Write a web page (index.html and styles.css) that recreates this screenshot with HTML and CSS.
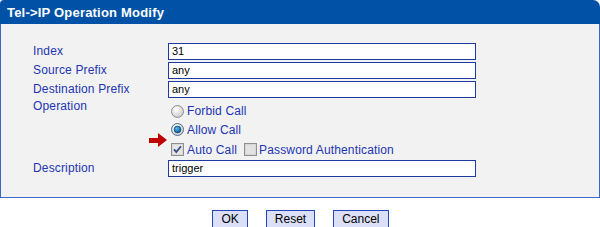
FILE: index.html
```html
<!DOCTYPE html>
<html>
<head>
<meta charset="utf-8">
<link rel="stylesheet" href="styles.css">
</head>
<body>
<div class="panel">
  <div class="head">Tel-&gt;IP Operation Modify</div>
  <div class="body">
    <div class="row"><span class="lbl">Index</span><span class="field">31</span></div>
    <div class="row"><span class="lbl">Source Prefix</span><span class="field">any</span></div>
    <div class="row"><span class="lbl">Destination Prefix</span><span class="field">any</span></div>
    <div class="row op">
      <span class="lbl">Operation</span>
      <div class="opts">
        <div class="opt o1">
          <svg class="ctl" width="13" height="13" viewBox="0 0 13 13"><defs><radialGradient id="rg" cx="0.4" cy="0.35" r="0.7"><stop offset="0" stop-color="#ffffff"/><stop offset="1" stop-color="#c8c8c8"/></radialGradient></defs><circle cx="6.5" cy="6.5" r="6" fill="url(#rg)" stroke="#8e8f8f"/></svg>
          <span>Forbid Call</span>
        </div>
        <div class="opt o2">
          <svg class="ctl" width="13" height="13" viewBox="0 0 13 13"><defs><radialGradient id="rg2" cx="0.4" cy="0.35" r="0.7"><stop offset="0" stop-color="#ffffff"/><stop offset="1" stop-color="#c8c8c8"/></radialGradient><radialGradient id="dot" cx="0.4" cy="0.35" r="0.7"><stop offset="0" stop-color="#49c2f5"/><stop offset="1" stop-color="#0b4f8a"/></radialGradient></defs><circle cx="6.5" cy="6.5" r="6" fill="url(#rg2)" stroke="#4d6e8e"/><circle cx="6.5" cy="6.5" r="3.4" fill="url(#dot)" stroke="#123a66" stroke-width="0.6"/></svg>
          <span>Allow Call</span>
        </div>
        <div class="opt o3">
          <svg class="ctl" width="13" height="13" viewBox="0 0 13 13"><rect x="0.5" y="0.5" width="12" height="12" fill="#f4f4f4" stroke="#8e8f8f"/><rect x="1.5" y="1.5" width="10" height="10" fill="#e6e6e6" stroke="#d8d8d8"/><path d="M3 6.3 L5.3 9 L10 3.2" fill="none" stroke="#3a4d86" stroke-width="1.8"/></svg>
          <span>Auto Call</span>
          <svg class="ctl ctl2" width="13" height="13" viewBox="0 0 13 13"><rect x="0.5" y="0.5" width="12" height="12" fill="#f4f4f4" stroke="#8e8f8f"/><rect x="1.5" y="1.5" width="10" height="10" fill="#e2e2e2" stroke="#d6d6d6"/></svg>
          <span>Password Authentication</span>
        </div>
      </div>
    </div>
    <div class="row"><span class="lbl">Description</span><span class="field">trigger</span></div>
  </div>
  <svg class="arrow" width="19" height="15" viewBox="0 0 19 15"><polygon points="0,5 9,5 9,0 18,7 9,14 9,10 0,10" fill="#c00000"/></svg>
</div>
<div class="buttons">
  <span class="btn">OK</span>
  <span class="btn">Reset</span>
  <span class="btn">Cancel</span>
</div>
</body>
</html>
```

FILE: styles.css
```css
html, body {
  margin: 0;
  padding: 0;
  background: #ffffff;
}
body {
  width: 600px;
  height: 227px;
  overflow: hidden;
  font-family: "Liberation Sans", Arial, sans-serif;
}
.panel {
  position: relative;
  width: 600px;
}
.head {
  height: 24px;
  background: #0152a6;
  color: #ffffff;
  font-weight: bold;
  font-size: 13px;
  letter-spacing: 0.2px;
  line-height: 25px;
  padding-left: 7px;
  border-radius: 4px 7px 0 0;
}
.body {
  box-sizing: border-box;
  background: #f2f2f2;
  border: 1px solid #3b69c6;
  border-top: none;
  padding: 19px 0 18px 32px;
}
.row {
  display: flex;
  height: 19px;
}
.lbl {
  width: 135px;
  flex: none;
  font-size: 12px;
  letter-spacing: 0.15px;
  line-height: 17px;
  color: #2235b3;
}
.field {
  box-sizing: border-box;
  width: 308px;
  height: 17px;
  background: #ffffff;
  border: 1px solid #1d3aa3;
  font-size: 11px;
  line-height: 15px;
  padding-left: 3px;
  color: #000000;
}
.row.op {
  height: 60px;
}
.row.op .lbl {
  line-height: 13px;
}
.opts {
  display: flex;
  flex-direction: column;
  padding-top: 2px;
}
.opt {
  display: flex;
  align-items: center;
  font-size: 12px;
  letter-spacing: 0.15px;
  color: #2235b3;
  padding-left: 3px;
}
.o1 { height: 18px; }
.o2 { height: 19px; }
.o3 { height: 21px; }
.ctl {
  flex: none;
  margin-right: 3px;
}
.ctl2 {
  margin-left: 7px;
  margin-right: 2px;
}
.arrow {
  position: absolute;
  left: 149px;
  top: 133px;
}
.buttons {
  display: flex;
  justify-content: center;
  gap: 18px;
  margin-top: 12px;
  padding-left: 1px;
}
.btn {
  box-sizing: border-box;
  height: 19px;
  padding: 0 8px;
  background: #dcdff8;
  border: 1px solid #2445b6;
  font-size: 12px;
  line-height: 17px;
  color: #000000;
}
```
